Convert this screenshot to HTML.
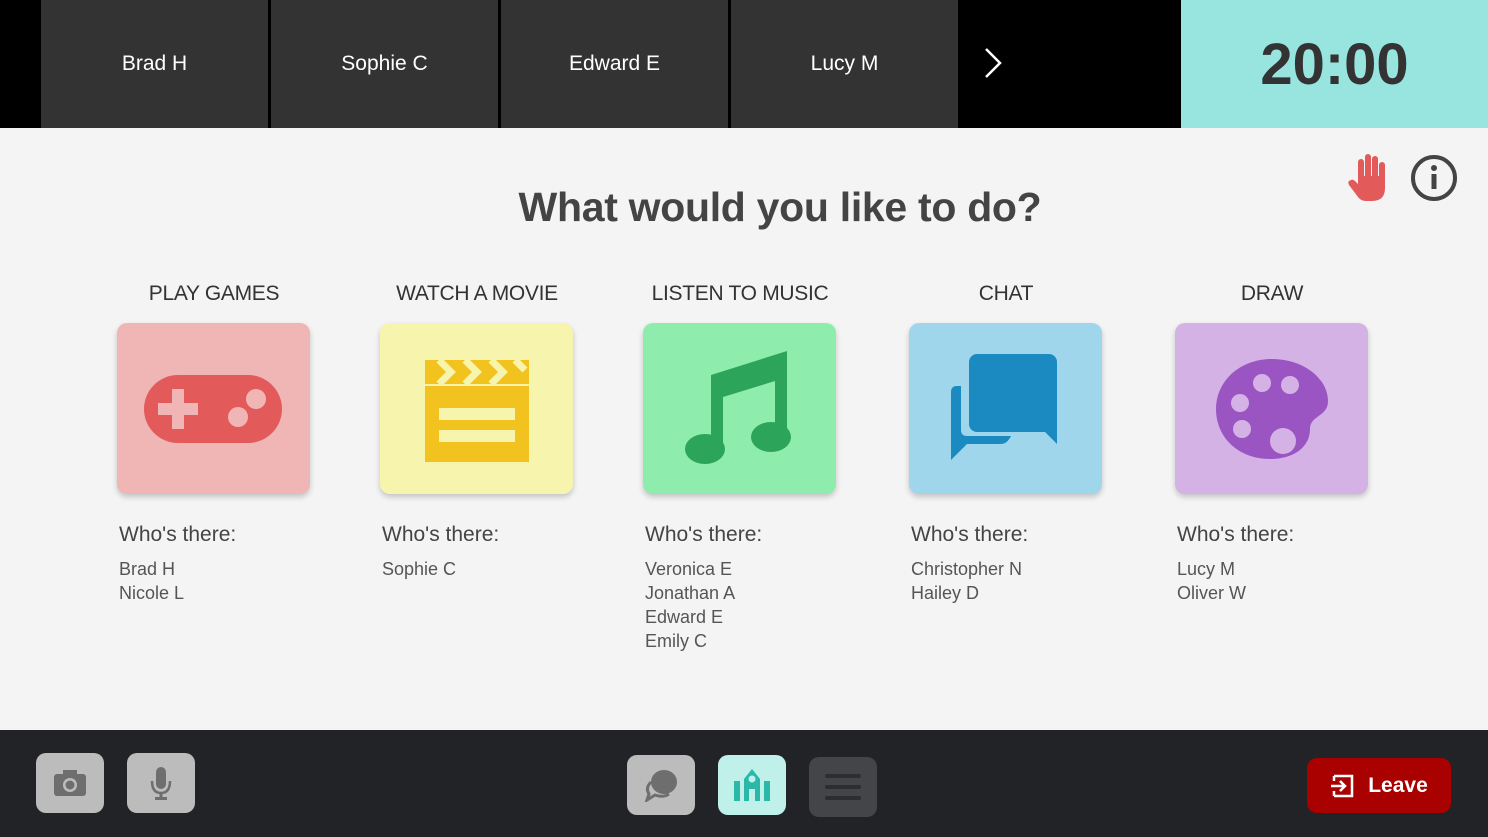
<!DOCTYPE html><html><head><style>
body{margin:0;width:1488px;height:837px;overflow:hidden;background:#f4f4f4;font-family:"Liberation Sans",sans-serif;position:relative}
.top{position:absolute;left:0;top:0;width:1488px;height:128px;background:#000}
.tile{position:absolute;top:0;height:128px;width:227px;background:#333;color:#fff;font-size:21px;display:flex;align-items:center;justify-content:center}
.timer{position:absolute;left:1181px;top:0;width:307px;height:128px;background:#98e5df;color:#333;font-size:58px;font-weight:bold;display:flex;align-items:center;justify-content:center}
h1{position:absolute;left:0;width:1560px;top:184px;margin:0;text-align:center;font-size:41px;color:#444;font-weight:bold;letter-spacing:-0.3px}
.col{position:absolute;top:282px;width:194px}
.col .t{text-align:center;font-size:21px;color:#333;height:24px;white-space:nowrap;margin-left:-40px;margin-right:-40px;letter-spacing:-0.3px}
.card{margin-top:17px;width:193px;height:171px;border-radius:10px;box-shadow:0 3px 6px rgba(0,0,0,.2);display:flex;align-items:center;justify-content:center}
.w{margin-top:29px;margin-left:2px;font-size:21px;color:#444}
.n{margin-top:10px;margin-left:2px;font-size:18px;color:#555;line-height:24px}
.bot{position:absolute;left:0;top:730px;width:1488px;height:107px;background:#222326}
.btn{position:absolute;width:68px;height:60px;border-radius:10px;display:flex;align-items:center;justify-content:center}
</style></head><body>
<div class="top">
<div class="tile" style="left:41px">Brad H</div>
<div class="tile" style="left:271px">Sophie C</div>
<div class="tile" style="left:501px">Edward E</div>
<div class="tile" style="left:731px">Lucy M</div>
<svg style="position:absolute;left:980px;top:46px" width="26" height="34"><path d="M6 3 L20 17 L6 31" stroke="#fff" stroke-width="2.5" fill="none"/></svg>
<div class="timer">20:00</div>
</div>
<svg style="position:absolute;left:1346px;top:152px" width="44" height="52" viewBox="0 0 44 52">
<g fill="#e35a5a">
<rect x="12" y="7" width="6" height="30" rx="3"/>
<rect x="19" y="2" width="6" height="30" rx="3"/>
<rect x="26" y="4" width="6" height="30" rx="3"/>
<rect x="33" y="10" width="6" height="26" rx="3"/>
<path d="M12 24 L39 24 L39 36 Q39 49 26 49 L20 49 Q15 49 12 45 L3 33 Q1 29 5 28 Q7 27 9 29 L12 32Z"/>
</g></svg>
<svg style="position:absolute;left:1409px;top:154px" width="50" height="50"><circle cx="25" cy="24" r="21" stroke="#444" stroke-width="4" fill="none"/><circle cx="25" cy="14" r="3" fill="#444"/><rect x="22.5" y="20" width="5" height="15" fill="#444"/></svg>
<h1>What would you like to do?</h1>

<div class="col" style="left:117px"><div class="t">PLAY GAMES</div><div class="card" style="background:#f0b6b6"><svg width="140" height="72" viewBox="0 0 140 72"><rect x="0" y="2" width="138" height="68" rx="34" fill="#e35a5a"/><rect x="14" y="30" width="40" height="12" fill="#f0b6b6"/><rect x="28" y="16" width="12" height="40" fill="#f0b6b6"/><circle cx="112" cy="26" r="10" fill="#f0b6b6"/><circle cx="94" cy="44" r="10" fill="#f0b6b6"/></svg></div><div class="w">Who's there:</div><div class="n">Brad H<br>Nicole L</div></div>

<div class="col" style="left:380px"><div class="t">WATCH A MOVIE</div><div class="card" style="background:#f7f5ad"><svg width="104" height="106" viewBox="0 0 104 106"><rect x="0" y="30" width="104" height="76" fill="#f2c21f"/><path d="M0 4 L104 4 L104 28 L0 28Z" fill="#f2c21f"/><path d="M14 4 L26 16 L14 28 M40 4 L52 16 L40 28 M66 4 L78 16 L66 28 M90 4 L100 14" stroke="#f7f5ad" stroke-width="7" fill="none"/><rect x="14" y="52" width="76" height="12" fill="#f7f5ad"/><rect x="14" y="74" width="76" height="12" fill="#f7f5ad"/></svg></div><div class="w">Who's there:</div><div class="n">Sophie C</div></div>

<div class="col" style="left:643px"><div class="t">LISTEN TO MUSIC</div><div class="card" style="background:#8eedac"><svg width="110" height="116" viewBox="0 0 110 116"><path d="M26 24 L102 0 L102 90 L90 90 L90 30 L38 46 L38 100 L26 100 Z" fill="#2ca55b"/><ellipse cx="20" cy="98" rx="20" ry="15" fill="#2ca55b"/><ellipse cx="86" cy="86" rx="20" ry="15" fill="#2ca55b"/></svg></div><div class="w">Who's there:</div><div class="n">Veronica E<br>Jonathan A<br>Edward E<br>Emily C</div></div>

<div class="col" style="left:909px"><div class="t">CHAT</div><div class="card" style="background:#a0d6ec"><svg width="110" height="110" viewBox="0 0 110 110"><path d="M0 38 Q0 32 6 32 L10 32 L10 76 Q10 82 16 82 L60 82 Q56 90 50 90 L16 90 L0 106Z" fill="#1a8ac0"/><rect x="18" y="0" width="88" height="78" rx="8" fill="#1a8ac0"/><path d="M90 74 L106 90 L106 70Z" fill="#1a8ac0"/></svg></div><div class="w">Who's there:</div><div class="n">Christopher N<br>Hailey D</div></div>

<div class="col" style="left:1175px"><div class="t">DRAW</div><div class="card" style="background:#d5b2e5"><svg width="116" height="104" viewBox="0 0 116 104"><path d="M58 2 C90 2 114 22 114 44 C114 60 96 58 96 72 C96 90 80 102 56 102 C24 102 2 80 2 52 C2 24 26 2 58 2Z" fill="#9b55c2"/><circle cx="48" cy="26" r="9" fill="#d5b2e5"/><circle cx="76" cy="28" r="9" fill="#d5b2e5"/><circle cx="26" cy="46" r="9" fill="#d5b2e5"/><circle cx="28" cy="72" r="9" fill="#d5b2e5"/><circle cx="69" cy="84" r="13" fill="#d5b2e5"/></svg></div><div class="w">Who's there:</div><div class="n">Lucy M<br>Oliver W</div></div>

<div class="bot">
<div class="btn" style="left:36px;top:23px;background:#bcbcbc"><svg width="34" height="30"><rect x="1" y="6" width="32" height="22" rx="3" fill="#6e6e6e"/><rect x="10" y="2" width="14" height="6" fill="#6e6e6e"/><circle cx="17" cy="17" r="7" fill="#bcbcbc"/><circle cx="17" cy="17" r="4.5" fill="#6e6e6e"/></svg></div>
<div class="btn" style="left:127px;top:23px;background:#bcbcbc"><svg width="26" height="36"><rect x="8" y="2" width="10" height="22" rx="5" fill="#6e6e6e"/><path d="M4 16 Q4 28 13 28 Q22 28 22 16" stroke="#6e6e6e" stroke-width="2.5" fill="none"/><rect x="11.5" y="28" width="3" height="5" fill="#6e6e6e"/><rect x="7" y="32" width="12" height="3" fill="#6e6e6e"/></svg></div>
<div class="btn" style="left:627px;top:25px;background:#bcbcbc"><svg width="36" height="34"><ellipse cx="21" cy="14" rx="13" ry="12" fill="#6e6e6e"/><path d="M8 14 Q2 20 6 26 L4 32 L12 27 Q20 30 26 26" stroke="#6e6e6e" stroke-width="3" fill="none"/></svg></div>
<div class="btn" style="left:718px;top:25px;background:#bff0ea"><svg width="44" height="36"><path d="M14 12 L22 2 L30 12 L30 34 L25 34 L25 22 L19 22 L19 34 L14 34Z" fill="#2bb8a8"/><circle cx="22" cy="12" r="3.5" fill="#bff0ea"/><rect x="4" y="14" width="6" height="20" fill="#2bb8a8"/><rect x="34" y="14" width="6" height="20" fill="#2bb8a8"/></svg></div>
<div class="btn" style="left:809px;top:27px;background:#444548"><svg width="40" height="32"><rect x="2" y="3" width="36" height="4" rx="2" fill="#2c2d30"/><rect x="2" y="14" width="36" height="4" rx="2" fill="#2c2d30"/><rect x="2" y="25" width="36" height="4" rx="2" fill="#2c2d30"/></svg></div>
<div class="btn" style="left:1307px;top:28px;width:144px;height:55px;background:#a90000;color:#fff;font-size:21px;font-weight:bold"><svg width="26" height="24" style="margin-right:12px"><path d="M4 2 L22 2 L22 22 L4 22 M4 2 L4 7 M4 17 L4 22" stroke="#fff" stroke-width="2.5" fill="none"/><path d="M1 12 L15 12 M10 7 L15 12 L10 17" stroke="#fff" stroke-width="2.5" fill="none"/></svg>Leave</div>
</div>
</body></html>
